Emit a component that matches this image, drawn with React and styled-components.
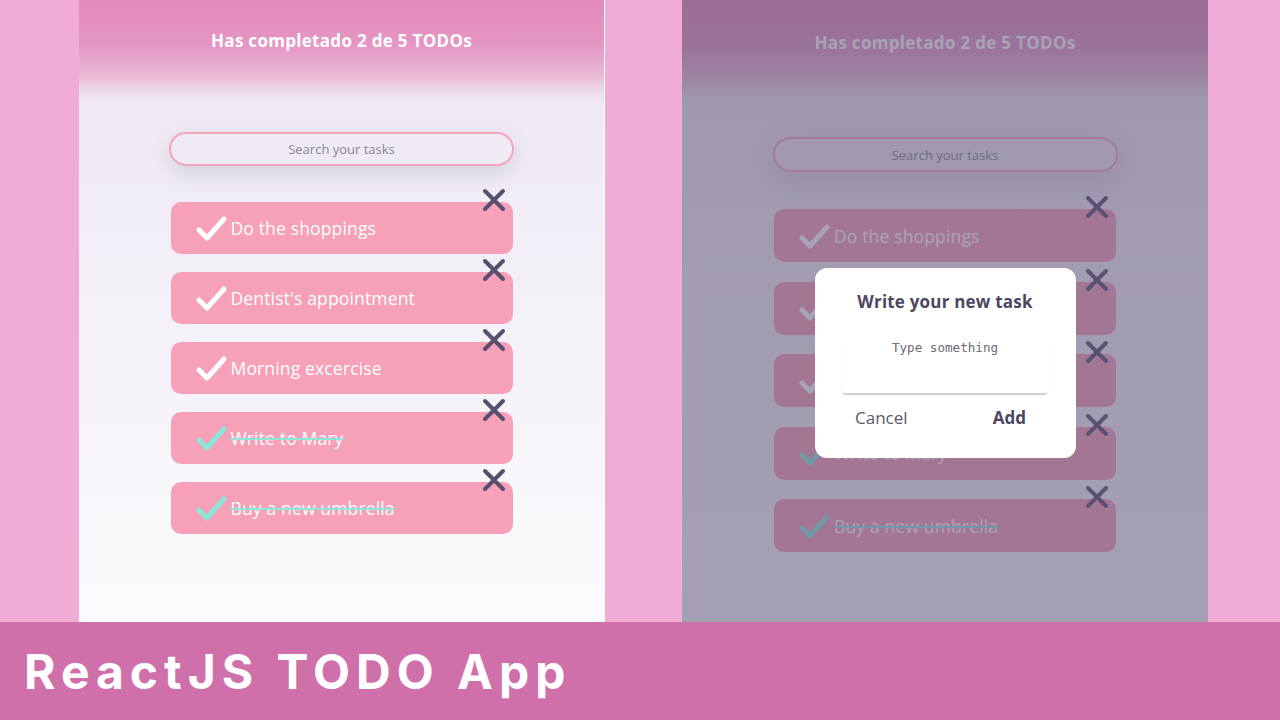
import React from 'react';
import styled, { createGlobalStyle } from 'styled-components';

const GlobalStyle = createGlobalStyle`
  html, body {
    margin: 0;
    padding: 0;
  }
  body {
    width: 1280px;
    height: 720px;
    overflow: hidden;
    font-family: 'Open Sans', 'Noto Sans', sans-serif;
  }
`;

const Page = styled.div`
  display: flex;
  flex-direction: column;
  width: 1280px;
  height: 720px;
`;

const Stage = styled.div`
  display: flex;
  height: 622px;
  padding-left: 79px;
  gap: 77px;
  background-color: #f0acd4;
`;

const Panel = styled.div`
  position: relative;
  width: 526px;
  height: 622px;
  box-sizing: border-box;
  border-right: ${props => (props.$edge ? '1px solid #ffffff' : '0')};
  background: linear-gradient(
    to bottom,
    #e48abb 0px,
    #e596c3 45px,
    #e9b8d6 75px,
    #eddbea 92px,
    #efe9f4 102px,
    #f4f1f8 320px,
    #fbfbfd 100%
  );
  overflow: hidden;
`;

const Content = styled.div`
  display: flex;
  flex-direction: column;
  align-items: center;
  padding-top: ${props => (props.$tall ? '32px' : '30px')};
`;

const Counter = styled.h1`
  margin: 0;
  height: 22px;
  line-height: 22px;
  font-size: 17px;
  font-weight: 700;
  color: #ffffff;
  letter-spacing: 0.3px;
`;

const Search = styled.input`
  margin-top: ${props => (props.$tall ? '83px' : '80px')};
  width: 345px;
  height: ${props => (props.$tall ? '35px' : '34px')};
  box-sizing: border-box;
  border: 2px solid #f5a6bd;
  border-radius: 18px;
  background-color: #f0eaf4;
  box-shadow: 0 8px 24px rgba(70, 60, 100, 0.16);
  text-align: center;
  font-family: 'Open Sans', 'Noto Sans', sans-serif;
  font-size: 13px;
  color: #8a8594;
  outline: none;

  &::placeholder {
    color: #8a8594;
  }
`;

const List = styled.ul`
  display: flex;
  flex-direction: column;
  gap: ${props => (props.$tall ? '19.5px' : '18px')};
  margin: ${props => (props.$tall ? '37px' : '36px')} 0 0 0;
  padding: 0;
  list-style: none;
`;

const Item = styled.li`
  position: relative;
  display: flex;
  align-items: center;
  width: 342px;
  height: ${props => (props.$tall ? '53px' : '52px')};
  padding-left: 24px;
  box-sizing: border-box;
  border-radius: 10px;
  background-color: #f6a1b7;
`;

const Check = styled.svg`
  width: 33px;
  height: 28px;
  flex: none;
  color: ${props => (props.$done ? '#8ce6da' : '#ffffff')};
`;

const Label = styled.p`
  margin: 0 0 0 3px;
  font-size: 17.5px;
  letter-spacing: 0.15px;
  color: #ffffff;
  text-decoration: ${props => (props.$done ? 'line-through' : 'none')};
  text-decoration-color: #8ce6da;
  text-decoration-thickness: 2px;
`;

const Delete = styled.svg`
  position: absolute;
  top: -14px;
  right: 7px;
  width: 24px;
  height: 24px;
  color: #584e6e;
`;

const Overlay = styled.div`
  position: absolute;
  inset: 0;
  display: flex;
  justify-content: center;
  align-items: flex-start;
  padding-top: 268px;
  background-color: rgba(94, 86, 120, 0.55);
`;

const Modal = styled.form`
  display: flex;
  flex-direction: column;
  align-items: center;
  width: 261px;
  height: 190px;
  box-sizing: border-box;
  padding-top: 22px;
  border-radius: 12px;
  background-color: #ffffff;
`;

const ModalTitle = styled.label`
  font-size: 17px;
  font-weight: 700;
  letter-spacing: 0.2px;
  color: #4d4660;
  line-height: 24px;
`;

const TextArea = styled.textarea`
  margin-top: 24px;
  width: 206px;
  height: 55px;
  box-sizing: border-box;
  padding-top: 2px;
  border: 0;
  border-radius: 4px;
  background-color: #ffffff;
  box-shadow: 0 3px 2px -1px rgba(0, 0, 0, 0.22);
  resize: none;
  text-align: center;
  font-family: 'DejaVu Sans Mono', 'Liberation Mono', monospace;
  font-size: 12.6px;
  color: #6c6a72;

  &::placeholder {
    color: #6c6a72;
  }
`;

const Buttons = styled.div`
  display: flex;
  justify-content: space-between;
  width: 206px;
  margin-top: 13px;
  padding: 0 22px 0 13px;
  box-sizing: border-box;
`;

const Button = styled.button`
  padding: 0;
  border: 0;
  background: transparent;
  font-family: 'Open Sans', 'Noto Sans', sans-serif;
  font-size: 17px;
  font-weight: ${props => (props.$primary ? 700 : 400)};
  color: ${props => (props.$primary ? '#4d4660' : '#5c5668')};
  cursor: pointer;
`;

const Banner = styled.div`
  display: flex;
  align-items: center;
  height: 98px;
  padding-left: 24px;
  background-color: #d070aa;
`;

const BannerTitle = styled.h2`
  margin: 0;
  font-family: 'Inter', 'Noto Sans', sans-serif;
  font-size: 48px;
  font-weight: 700;
  letter-spacing: 6px;
  color: #ffffff;
`;

const todos = [
  { text: 'Do the shoppings', done: false },
  { text: "Dentist's appointment", done: false },
  { text: 'Morning excercise', done: false },
  { text: 'Write to Mary', done: true },
  { text: 'Buy a new umbrella', done: true },
];

function CheckIcon({ done }) {
  return (
    <Check $done={done} viewBox="0 0 33 28" fill="none">
      <path
        d="M4 16 L12 24 L29 5"
        stroke="currentColor"
        strokeWidth="5"
        strokeLinecap="round"
        strokeLinejoin="round"
      />
    </Check>
  );
}

function DeleteIcon() {
  return (
    <Delete viewBox="0 0 24 24" fill="none">
      <path
        d="M3 3 L21 21 M21 3 L3 21"
        stroke="currentColor"
        strokeWidth="4"
        strokeLinecap="round"
      />
    </Delete>
  );
}

function TodoApp({ tall, edge, children }) {
  return (
    <Panel $edge={edge}>
      <Content $tall={tall}>
        <Counter>Has completado 2 de 5 TODOs</Counter>
        <Search $tall={tall} placeholder="Search your tasks" readOnly />
        <List $tall={tall}>
          {todos.map(todo => (
            <Item key={todo.text} $tall={tall}>
              <CheckIcon done={todo.done} />
              <Label $done={todo.done}>{todo.text}</Label>
              <DeleteIcon />
            </Item>
          ))}
        </List>
      </Content>
      {children}
    </Panel>
  );
}

export default function App() {
  return (
    <Page>
      <GlobalStyle />
      <Stage>
        <TodoApp edge />
        <TodoApp tall>
          <Overlay>
            <Modal onSubmit={e => e.preventDefault()}>
              <ModalTitle>Write your new task</ModalTitle>
              <TextArea placeholder="Type something" readOnly />
              <Buttons>
                <Button type="button">Cancel</Button>
                <Button type="submit" $primary>
                  Add
                </Button>
              </Buttons>
            </Modal>
          </Overlay>
        </TodoApp>
      </Stage>
      <Banner>
        <BannerTitle>ReactJS TODO App</BannerTitle>
      </Banner>
    </Page>
  );
}
